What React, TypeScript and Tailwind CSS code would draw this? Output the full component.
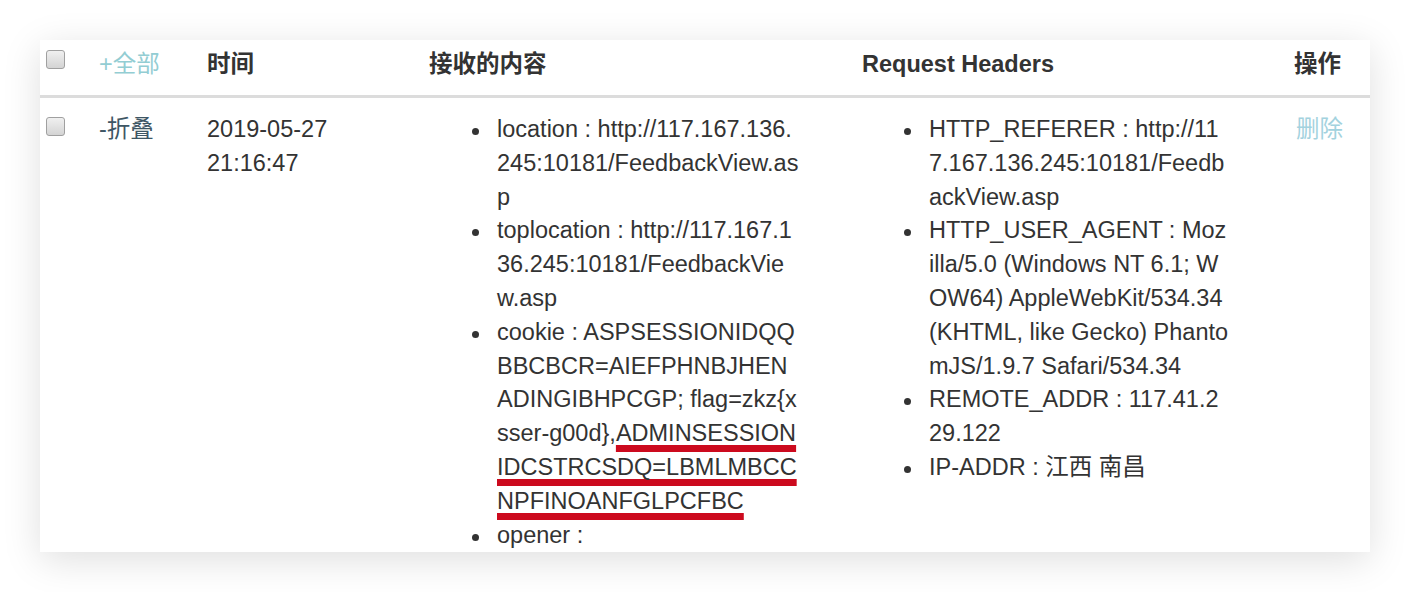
import React from "react";

type Seg = { t: string; u?: boolean };
type Item = Seg[][];

const contentItems: Item[] = [
  [[{ t: "location : http://117.167.136." }], [{ t: "245:10181/FeedbackView.as" }], [{ t: "p" }]],
  [[{ t: "toplocation : http://117.167.1" }], [{ t: "36.245:10181/FeedbackVie" }], [{ t: "w.asp" }]],
  [
    [{ t: "cookie : ASPSESSIONIDQQ" }],
    [{ t: "BBCBCR=AIEFPHNBJHEN" }],
    [{ t: "ADINGIBHPCGP; flag=zkz{x" }],
    [{ t: "sser-g00d}," }, { t: "ADMINSESSION", u: true }],
    [{ t: "IDCSTRCSDQ=LBMLMBCC", u: true }],
    [{ t: "NPFINOANFGLPCFBC", u: true }],
  ],
  [[{ t: "opener :" }]],
];

const headerItems: Item[] = [
  [[{ t: "HTTP_REFERER : http://11" }], [{ t: "7.167.136.245:10181/Feedb" }], [{ t: "ackView.asp" }]],
  [
    [{ t: "HTTP_USER_AGENT : Moz" }],
    [{ t: "illa/5.0 (Windows NT 6.1; W" }],
    [{ t: "OW64) AppleWebKit/534.34" }],
    [{ t: "(KHTML, like Gecko) Phanto" }],
    [{ t: "mJS/1.9.7 Safari/534.34" }],
  ],
  [[{ t: "REMOTE_ADDR : 117.41.2" }], [{ t: "29.122" }]],
  [[{ t: "IP-ADDR : 江西 南昌" }]],
];

function Checkbox({ className }: { className: string }) {
  return (
    <span
      className={
        "block h-[19px] w-[19px] rounded-[3px] border border-[#a0a0a0] bg-linear-to-b from-[#f0f0f0] to-[#d4d4d4] " +
        className
      }
    />
  );
}

function List({ items, indent }: { items: Item[]; indent: string }) {
  return (
    <ul className="flex flex-col">
      {items.map((item, i) => (
        <li key={i} className="flex">
          <span className={"mr-[18px] mt-[15px] h-[7px] w-[7px] shrink-0 rounded-full bg-[#333333] " + indent} />
          <div className="flex flex-col">
            {item.map((line, j) => (
              <span key={j} className="whitespace-nowrap">
                {line.map((s, k) =>
                  s.u ? (
                    <span
                      key={k}
                      className="underline decoration-[#cc0a1e] decoration-[7px] underline-offset-[4px] [text-decoration-skip-ink:none]"
                    >
                      {s.t}
                    </span>
                  ) : (
                    <span key={k}>{s.t}</span>
                  )
                )}
              </span>
            ))}
          </div>
        </li>
      ))}
    </ul>
  );
}

export default function App() {
  return (
    <div className="min-h-[592px] bg-white px-[40px] pt-[40px] font-['Liberation_Sans','Noto_Sans_CJK_SC',sans-serif] text-[23.5px] leading-[33.8px] text-[#333333]">
      <div className="h-[512px] overflow-hidden bg-white shadow-[0_8px_36px_rgba(0,0,0,0.13)]">
        {/* header */}
        <div className="flex h-[58px] border-b-[3px] border-[#dcdcdc] font-bold">
          <div className="w-[46px] shrink-0 pl-[6px]">
            <Checkbox className="mt-[10px]" />
          </div>
          <div className="w-[108px] shrink-0 pl-[13px] pt-[8px] font-normal text-[#93cdd3]">+全部</div>
          <div className="w-[222px] shrink-0 pl-[13px] pt-[8px]">时间</div>
          <div className="w-[433px] shrink-0 pl-[13px] pt-[8px]">接收的内容</div>
          <div className="w-[432px] shrink-0 pl-[13px] pt-[8px]">Request Headers</div>
          <div className="flex-1 pl-[13px] pt-[8px]">操作</div>
        </div>
        {/* body row */}
        <div className="flex">
          <div className="w-[46px] shrink-0 pl-[6px]">
            <Checkbox className="mt-[19px]" />
          </div>
          <div className="w-[108px] shrink-0 pl-[13px] pt-[15px] text-[#3e5664]">-折叠</div>
          <div className="w-[222px] shrink-0 pl-[13px] pt-[15px]">
            <div>2019-05-27</div>
            <div>21:16:47</div>
          </div>
          <div className="w-[433px] shrink-0 pl-[13px] pt-[15px]">
            <List items={contentItems} indent="ml-[43px]" />
          </div>
          <div className="w-[432px] shrink-0 pl-[13px] pt-[15px]">
            <List items={headerItems} indent="ml-[42px]" />
          </div>
          <div className="flex-1 pl-[15px] pt-[15px] text-[#a3d2de]">删除</div>
        </div>
      </div>
    </div>
  );
}
